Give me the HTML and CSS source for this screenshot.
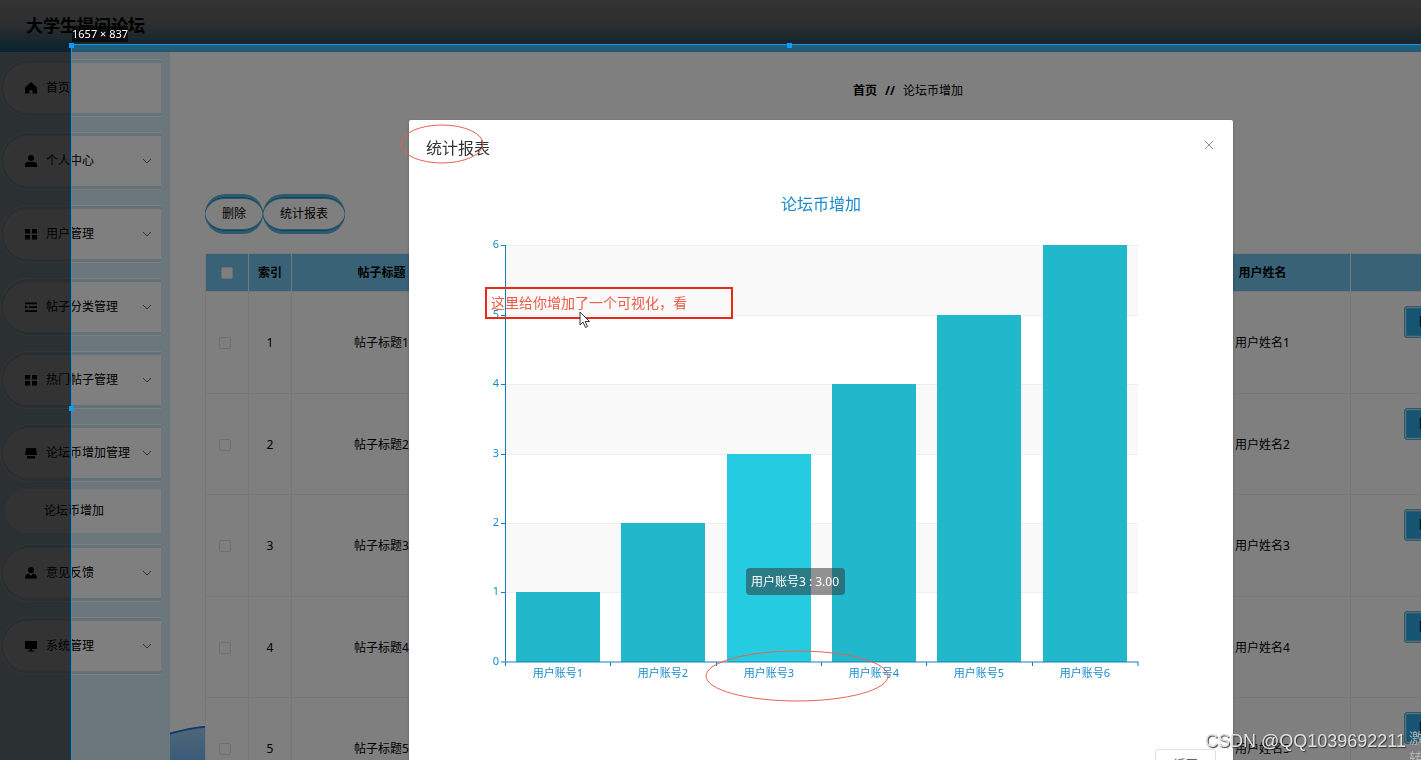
FILE: index.html
```html
<!DOCTYPE html>
<html lang="zh-CN">
<head>
<meta charset="utf-8">
<title>大学生提问论坛</title>
<link rel="stylesheet" href="styles.css">
</head>
<body>
<header class="header"><h1 class="brand">大学生提问论坛</h1></header>
<div class="layout">
  <nav class="sidebar">
    <ul class="menu">
      <li class="item"><button class="entry"><svg class="icon" viewBox="0 0 12 12"><path d="M6 0 12 5.500V11.500H7.500V8H4.500V11.500H0V5.500Z"/></svg><span>首页</span></button></li>
      <li class="item"><button class="entry"><svg class="icon" viewBox="0 0 12 12"><circle cx="6" cy="3" r="3"/><path d="M0 12V10Q0 7 3 7H9Q12 7 12 10V12Z"/></svg><span>个人中心</span><svg class="chevron" viewBox="0 0 10 6"><path d="M1 1 5 5 9 1"/></svg></button></li>
      <li class="item"><button class="entry"><svg class="icon" viewBox="0 0 12 12"><path d="M0 1H5V5.500H0ZM7 1H12V5.500H7ZM0 7H5V11.500H0ZM7 7H12V11.500H7Z"/></svg><span>用户管理</span><svg class="chevron" viewBox="0 0 10 6"><path d="M1 1 5 5 9 1"/></svg></button></li>
      <li class="item"><button class="entry"><svg class="icon" viewBox="0 0 12 12"><path d="M0 1.500H12V3.200H0ZM4 5.300H12V7H4ZM0 9.300H12V11H0ZM0 4.300 3 6.200 0 8Z"/></svg><span>帖子分类管理</span><svg class="chevron" viewBox="0 0 10 6"><path d="M1 1 5 5 9 1"/></svg></button></li>
      <li class="item"><button class="entry"><svg class="icon" viewBox="0 0 12 12"><path d="M0 1H5V5.500H0ZM7 1H12V5.500H7ZM0 7H5V11.500H0ZM7 7H12V11.500H7Z"/></svg><span>热门帖子管理</span><svg class="chevron" viewBox="0 0 10 6"><path d="M1 1 5 5 9 1"/></svg></button></li>
      <li class="item"><button class="entry"><svg class="icon" viewBox="0 0 12 12"><path d="M1 1H11L12 8H0ZM2 9H10V11.500H2Z"/></svg><span>论坛币增加管理</span><svg class="chevron" viewBox="0 0 10 6"><path d="M1 1 5 5 9 1"/></svg></button></li>
      <li class="subitem"><a class="sublink" href="#">论坛币增加</a></li>
      <li class="item"><button class="entry"><svg class="icon" viewBox="0 0 12 12"><circle cx="6" cy="3" r="3"/><path d="M0 11.500Q0 7 4 6.500L6 9 8 6.500Q12 7 12 11.500Z"/></svg><span>意见反馈</span><svg class="chevron" viewBox="0 0 10 6"><path d="M1 1 5 5 9 1"/></svg></button></li>
      <li class="item"><button class="entry"><svg class="icon" viewBox="0 0 12 12"><path d="M0 1H12V9H0ZM5 9H7V10.500H9.500V11.500H2.500V10.500H5Z"/></svg><span>系统管理</span><svg class="chevron" viewBox="0 0 10 6"><path d="M1 1 5 5 9 1"/></svg></button></li>
    </ul>
  </nav>
  <main class="main">
    <svg class="wave" viewBox="0 0 35 34"><defs><linearGradient id="w" x1="0" y1="0" x2="0" y2="1"><stop offset="0" stop-color="#a0cdf0"/><stop offset="1" stop-color="#78b8f4"/></linearGradient></defs><path d="M0 7Q17 2 35 0V34H0Z" fill="url(#w)"/><path d="M0 7.500Q17 2.500 35 .8" fill="none" stroke="#2272d8" stroke-width="2"/></svg>
    <div class="content">
      <div class="crumbs"><a class="crumb-home" href="#">首页</a><b>//</b><span>论坛币增加</span></div>
      <div class="tools"><button class="pill">删除</button><button class="pill">统计报表</button></div>
      <table class="grid">
        <colgroup><col class="c-small"><col class="c-small"><col class="c-title"><col class="c-mid"><col class="c-name"><col></colgroup>
        <thead><tr><th><input type="checkbox" class="check" aria-label="全选"></th><th>索引</th><th>帖子标题</th><th></th><th>用户姓名</th><th></th></tr></thead>
        <tbody>
          <tr><td><input type="checkbox" class="check" aria-label="选择1"></td><td>1</td><td>帖子标题1</td><td></td><td>用户姓名1</td><td class="ops"><button class="op">回复</button></td></tr>
          <tr><td><input type="checkbox" class="check" aria-label="选择2"></td><td>2</td><td>帖子标题2</td><td></td><td>用户姓名2</td><td class="ops"><button class="op">回复</button></td></tr>
          <tr><td><input type="checkbox" class="check" aria-label="选择3"></td><td>3</td><td>帖子标题3</td><td></td><td>用户姓名3</td><td class="ops"><button class="op">回复</button></td></tr>
          <tr><td><input type="checkbox" class="check" aria-label="选择4"></td><td>4</td><td>帖子标题4</td><td></td><td>用户姓名4</td><td class="ops"><button class="op">回复</button></td></tr>
          <tr><td><input type="checkbox" class="check" aria-label="选择5"></td><td>5</td><td>帖子标题5</td><td></td><td>用户姓名5</td><td class="ops"><button class="op">回复</button></td></tr>
        </tbody>
      </table>
    </div>
  </main>
</div>

<div class="mask">
  <section class="dialog" role="dialog" aria-labelledby="dialog-title">
    <div class="dialog-head"><h2 class="dialog-title" id="dialog-title">统计报表</h2><button class="close" aria-label="关闭"><svg viewBox="0 0 10 10"><path d="M1 1 9 9M9 1 1 9"/></svg></button></div>
    <svg class="chart" viewBox="0 0 670 500">
      <text class="chart-title" x="346" y="20">论坛币增加</text>
      <g class="band"><path d="M31 55H663V125H31ZM31 194H663V264H31ZM31 333H663V402H31Z"/></g>
      <path class="split" d="M31 55.500H663M31 125.500H663M31 194.500H663M31 264.500H663M31 333.500H663M31 402.500H663"/>
      <g class="bars">
        <rect x="41" y="402" width="84" height="70"/><rect x="146" y="333" width="84" height="139"/><rect class="active" x="252" y="264" width="84" height="208"/><rect x="357" y="194" width="84" height="278"/><rect x="462" y="125" width="84" height="347"/><rect x="568" y="55" width="84" height="417"/>
      </g>
      <path class="axis" d="M30.500 55V476M26 55.500H31M26 125.500H31M26 194.500H31M26 264.500H31M26 333.500H31M26 402.500H31M26 472H663.500M135.500 472V476M241.500 472V476M346.500 472V476M451.500 472V476M557.500 472V476M663 472V476"/>
      <g class="ylabels"><text x="24" y="58">6</text><text x="24" y="128">5</text><text x="24" y="197">4</text><text x="24" y="267">3</text><text x="24" y="336">2</text><text x="24" y="405">1</text><text x="24" y="475">0</text></g>
      <g class="xlabels"><text x="83" y="487">用户账号1</text><text x="188" y="487">用户账号2</text><text x="294" y="487">用户账号3</text><text x="399" y="487">用户账号4</text><text x="504" y="487">用户账号5</text><text x="610" y="487">用户账号6</text></g>
      <rect class="tip" x="271" y="378" width="99" height="27" rx="4"/>
      <text class="tip-text" x="320" y="396">用户账号3 : 3.00</text>
    </svg>
    <div class="dialog-foot"><button class="back">返回</button></div>
  </section>
</div>

<div class="shade shade-top"></div>
<div class="shade shade-left"></div>
<div class="capture"><span class="size">1657 × 837</span><i class="handle h-corner"></i><i class="handle h-top"></i><i class="handle h-left"></i></div>
<svg class="marks"><ellipse cx="442" cy="144" rx="41" ry="19"/><ellipse cx="797" cy="676" rx="91" ry="25"/></svg>
<div class="note">这里给你增加了一个可视化，看</div>
<svg class="cursor" viewBox="0 0 12 18"><path d="M1 1V14L4 11 6.500 16.500 8.500 15.500 6.200 10.500H10.500Z"/></svg>
<div class="activate"><div>激活 Windows</div><div>转到“设置”</div></div>
<div class="watermark">CSDN @QQ1039692211</div>
</body>
</html>
```
FILE: styles.css
```css
* { box-sizing: border-box; }
html, body { height: 100%; }
body {
  margin: 0;
  overflow: hidden;
  display: flex;
  flex-direction: column;
  font: 12px/16px "Noto Sans", "Noto Sans CJK SC", sans-serif;
  color: #000;
  background: #fff;
}
button { font: inherit; color: inherit; cursor: pointer; }
a { color: inherit; text-decoration: none; }

.header {
  flex: none;
  height: 52px;
  padding: 14px 26px;
  background: linear-gradient(180deg, #fff 0%, #e0e8ea 45%, #62b8dc 86%, #3cc0fc 88%, #48b0e4 100%);
}
.brand { margin: 0; font-size: 17px; line-height: 24px; font-weight: 700; }

.layout { flex: 1; min-height: 0; display: flex; }
.sidebar { flex: none; width: 170px; padding: 7px 9px 0 0; background: #d6eefa; }
.menu { list-style: none; margin: 0; padding: 0; }
.item {
  height: 58px;
  margin-bottom: 15px;
  padding: 3px 0 3px 2px;
  border: 1px solid #fff;
  border-width: 1px 0 1px 1px;
  border-radius: 30px 0 0 30px;
  background: #fff content-box;
  box-shadow: inset 0 0 0 3px #c6e4f3;
}
.entry {
  width: 100%;
  height: 100%;
  display: flex;
  align-items: center;
  gap: 9px;
  padding: 0 9px 0 22px;
  border: 0;
  border-radius: 26px 0 0 26px;
  background: #fff;
}
.icon { width: 12px; height: 12px; }
.chevron { width: 10px; height: 6px; margin-left: auto; fill: none; stroke: #666; }
.subitem { margin: -8px 0 11px 5px; }
.sublink { display: block; padding: 14px 0 14px 39px; border-radius: 22px 0 0 22px; background: #fff; }

.main { flex: 1; min-width: 0; overflow: hidden; position: relative; }
.wave { position: absolute; left: 0; bottom: 0; width: 35px; height: 34px; }
.content { position: relative; min-width: 1441px; padding: 31px 0 0 35px; }
.crumbs { display: flex; justify-content: center; gap: 8px; }
.crumb-home { font-weight: 700; }
.tools { display: flex; margin: 95px 0 19px; }
.pill {
  height: 40px;
  padding: 0 17px;
  border: 3px solid #58b4dc;
  border-width: 3px 0;
  border-radius: 20px;
  background: #fff;
  box-shadow: inset 0 1px #2a7fa8, inset 0 -1px #2a7fa8, inset 0 2px #58b4dc, inset 0 -2px #58b4dc;
}

.grid { width: 100%; table-layout: fixed; border-collapse: collapse; background: #fff; }
.c-small { width: 43px; }
.c-title { width: 180px; }
.c-mid { width: 703px; }
.c-name { width: 176px; }
.grid th, .grid td { padding: 0; border: 1px solid #ebeef5; text-align: center; }
.grid th { height: 38px; background: #72c4ec; }
.grid td { height: 102px; padding-top: 1px; }
.grid tr:nth-child(even) td { height: 101px; }
.grid td:first-child { padding-right: 4px; }
.grid .ops { vertical-align: top; text-align: left; padding: 14px 0 0 53px; }
.check {
  appearance: none;
  display: block;
  width: 12px;
  height: 12px;
  margin: 0 auto;
  border: 1px solid #dcdfe6;
  border-radius: 2px;
  background: #fff;
}
.op {
  height: 32px;
  padding: 0 14px;
  border: 1px solid #58b4dc;
  border-radius: 3px;
  background: #2aa8e4;
  box-shadow: inset 0 0 0 1px #b8dcee, inset 0 0 0 2px #58b4dc;
}

.mask { position: fixed; inset: 0; overflow: hidden; padding-top: 120px; background: rgba(0, 0, 0, .5); }
.dialog { width: 58%; margin-left: 409px; background: #fff; border-radius: 2px; box-shadow: 0 1px 3px rgba(0, 0, 0, .3); }
.dialog-head { display: flex; justify-content: space-between; padding: 16px 19px 0 17px; }
.dialog-title { margin: 0; font-size: 16px; line-height: 24px; font-weight: 400; color: #303133; }
.close { width: 10px; height: 18px; padding: 0; border: 0; background: none; }
.close svg { display: block; width: 10px; height: 10px; margin: 4px 0; stroke: #909399; fill: none; }
.chart { display: block; width: 670px; height: 500px; margin: 30px 0 0 66px; font-size: 11px; }
.chart text { text-anchor: middle; fill: #1b8bcb; }
.chart .chart-title { font-size: 16px; }
.chart .ylabels text { text-anchor: end; }
.band { fill: #f9f9f9; }
.split { stroke: #eee; fill: none; }
.axis { stroke: #1580b8; fill: none; }
.bars { fill: #22b8cc; }
.bars .active { fill: #25cbe1; }
.tip { fill: rgba(50, 50, 50, .52); }
.chart .tip-text { fill: #fff; font-size: 12px; }
.dialog-foot { display: flex; justify-content: flex-end; padding: 59px 17px 20px; }
.back { width: 61px; height: 32px; padding: 0; border: 1px solid #dcdfe6; border-radius: 3px; background: #fff; color: #606266; }

.shade { position: fixed; background: rgba(0, 0, 0, .6); }
.shade-top { inset: 0 0 auto 0; height: 44px; }
.shade-left { left: 0; top: 44px; bottom: 0; width: 71px; }
.capture { position: fixed; left: 71px; right: 0; top: 44px; bottom: 0; border: 1px solid #1596e6; border-width: 1px 0 0 1px; }
.size { position: absolute; left: 0; top: -19px; font-size: 11px; line-height: 16px; color: #fff; background: rgba(0, 0, 0, .7); white-space: nowrap; }
.handle { position: absolute; width: 5px; height: 5px; background: #0a9cff; }
.h-corner { left: -3px; top: -2px; }
.h-top { left: 715px; top: -2px; }
.h-left { left: -3px; top: 361px; }
.marks { position: fixed; left: 0; top: 0; width: 100%; height: 100%; fill: none; stroke: #e8604f; pointer-events: none; }
.note {
  position: fixed;
  left: 485px;
  top: 287px;
  width: 248px;
  padding: 4px;
  border: 2px solid #ea2a18;
  font-size: 14px;
  line-height: 20px;
  color: #ee5a46;
  white-space: nowrap;
}
.cursor { position: fixed; left: 579px; top: 311px; width: 12px; height: 18px; fill: #fff; stroke: #333; }
.activate { position: fixed; left: 1409px; top: 728px; font-size: 14px; line-height: 20px; color: #b4b4b4; white-space: nowrap; }
.watermark {
  position: fixed;
  right: 15px;
  bottom: 7px;
  font: 18px/24px "Liberation Sans", sans-serif;
  color: #e0e0e0;
  text-shadow: 1px 1px 1px #333;
  white-space: nowrap;
}
```
